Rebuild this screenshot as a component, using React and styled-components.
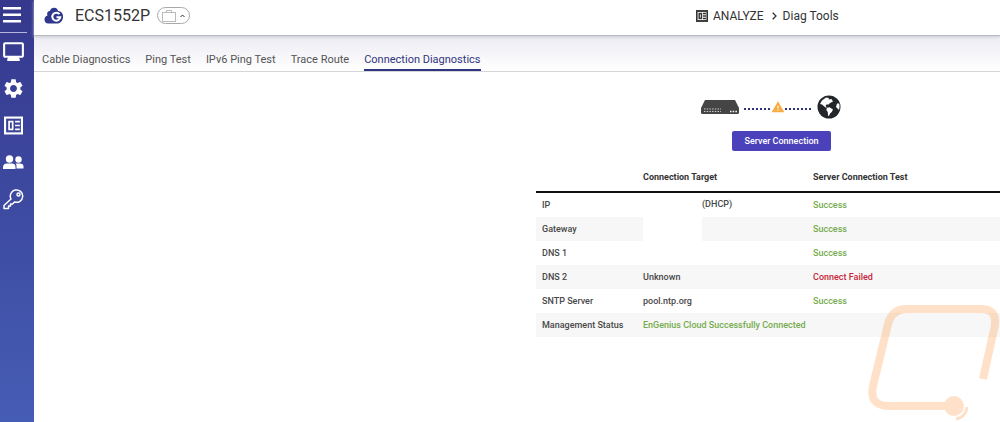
import styled, { createGlobalStyle } from "styled-components";
import { MdOutlineMonitor, MdSettings, MdWarning } from "react-icons/md";

const GlobalStyle = createGlobalStyle`
  * {
    box-sizing: border-box;
  }
  body {
    margin: 0;
    background: #fff;
    color: #333;
    font-family: Roboto, "Liberation Sans", sans-serif;
    overflow: hidden;
  }
  svg {
    display: block;
  }
`;

const Layout = styled.div`
  display: flex;
  min-height: 100vh;
`;

const Sidebar = styled.nav`
  display: flex;
  flex-direction: column;
  flex: 0 0 34px;
  background: linear-gradient(#35388d, #465db5);
`;

const MenuButton = styled.button`
  height: 33px;
  width: 27px;
  padding: 4px 3px 7px;
  border: 0;
  border-bottom: 1px solid #b5b5dd;
  background: none;
  color: #fff;
`;

const SideLink = styled.a`
  display: flex;
  align-items: center;
  justify-content: center;
  width: 27px;
  height: 37px;
  color: #fff;
`;

const Content = styled.div`
  flex: 1;
  min-width: 0;
  position: relative;
`;

const Header = styled.header`
  display: grid;
  grid-template-columns: 1fr 304px;
  align-items: center;
  height: 36px;
  padding-bottom: 4px;
  background: #fff;
  border-bottom: 1px solid #b9b9c1;
  box-shadow: 0 1px 3px #c9c9d2;
  position: relative;
`;

const Device = styled.div`
  display: flex;
  align-items: center;
  padding-left: 10px;
  > h1 {
    margin: 0 7px 0 10px;
    font-size: 16px;
    font-weight: 400;
    line-height: 20px;
  }
`;

const DeviceButton = styled.button`
  display: flex;
  align-items: center;
  justify-content: center;
  gap: 4px;
  width: 33px;
  height: 17px;
  padding: 0;
  border: 1px solid #aaa;
  border-radius: 9px;
  background: #fff;
`;

const Breadcrumb = styled.div`
  display: flex;
  align-items: center;
  font-size: 12px;
  > svg:first-child {
    margin-right: 5px;
  }
  > svg:nth-of-type(2) {
    margin: 0 6px 0 8px;
  }
`;

const Tabs = styled.nav`
  display: flex;
  gap: 15px;
  height: 36px;
  padding: 12px 8px 0;
  background: linear-gradient(#ececf3, #fff);
  border-bottom: 1px solid #d5d5da;
`;

const Tab = styled.a`
  height: 23px;
  font-size: 11px;
  line-height: 23px;
  text-decoration: none;
  white-space: nowrap;
  color: ${({ $active }) => ($active ? "#30357f" : "#555")};
  box-shadow: ${({ $active }) => ($active ? "inset 0 -2px #30357f" : "none")};
`;

const Main = styled.main`
  display: grid;
  grid-template-columns: 1fr 464px;
  padding-top: 22px;
`;

const Panel = styled.section`
  grid-column: 2;
`;

const Diagram = styled.div`
  display: flex;
  align-items: center;
  height: 26px;
  padding-left: 165px;
`;

const Link = styled.div`
  display: flex;
  align-items: center;
  margin: 0 5px;
`;

const Dots = styled.span`
  width: 27px;
  height: 2px;
  margin-top: 4px;
  background: repeating-linear-gradient(90deg, #30357f 0 2px, transparent 2px 4px);
`;

const TestButton = styled.button`
  display: block;
  width: 99px;
  height: 20px;
  margin: 11px 0 0 196px;
  padding: 0;
  border: 0;
  border-radius: 2px;
  background: #4b42bb;
  color: #fff;
  font-family: inherit;
  font-size: 9px;
  font-weight: 500;
`;

const Table = styled.table`
  width: 100%;
  margin-top: 12px;
  border-collapse: collapse;
  table-layout: fixed;
  font-size: 9px;
  font-weight: 500;
  text-align: left;
  color: #484848;
  th,
  td {
    height: 24px;
    padding: 0 0 0 6px;
    line-height: 12px;
    white-space: nowrap;
  }
  th {
    font-weight: 500;
  }
  thead th {
    height: 29px;
    font-weight: 700;
    color: #333;
    border-bottom: 2px solid #111;
  }
  tbody tr:nth-child(even) {
    background: #f7f7f7;
  }
`;

const Status = styled.span`
  color: ${({ $failed }) => ($failed ? "#c8253a" : "#75ab4d")};
`;

const Redacted = styled.span`
  display: inline-block;
  width: 59px;
  height: 24px;
  vertical-align: middle;
  background: #fff;
`;

const Watermark = styled.svg`
  position: absolute;
  right: 0;
  bottom: 0;
  pointer-events: none;
`;

const CloudLogo = () => (
  <svg width="21" height="18" viewBox="0 0 21 18">
    <path d="M4.500 16.500C1.500 16.500 .5 14.500 .5 12.500C.5 10.500 1.500 9 3.500 8.500C2.500 5.500 4 4 6 4C6.500 1.500 8.500 .5 10.500 .7C12.500 1 13.800 2 14 4C17.500 4 19.500 7 19 10.500C18.500 14.500 15.500 16.500 13 16.500Z" fill="#30388e" />
    <path d="M15.500 7.200A4 4 0 1 0 16.300 10.200H12.500" fill="none" stroke="#fff" strokeWidth="2" />
  </svg>
);

const PanelIcon = ({ size, bold }) => (
  <svg width={size} height={size} viewBox="0 0 18 18" fill="none" stroke="currentColor">
    <rect x="1" y="1.500" width="16" height="15" strokeWidth={bold ? 2.8 : 2} />
    <rect x="4.800" y="5.300" width="3.400" height="7.400" strokeWidth={bold ? 2.2 : 1.6} />
    <path d="M10.500 5.300H15M10.500 9H15M10.500 12.700H15" strokeWidth={bold ? 2.2 : 1.6} />
  </svg>
);

const PeopleIcon = () => (
  <svg width="21" height="15" viewBox="0 0 21 15" fill="#fff">
    <circle cx="6.500" cy="4" r="3.700" />
    <circle cx="15.500" cy="4.500" r="3.200" />
    <path d="M0 14V12C0 9.500 2 8.500 4 8.500H9C11 8.500 12.500 9.500 12.500 12V14Z" />
    <path d="M13.500 13.500V11C13.500 10 13.200 9.200 12.600 8.600H17C19 8.600 20.500 9.500 20.500 11.500V13.500Z" />
  </svg>
);

const KeyIcon = () => (
  <svg width="21" height="21" viewBox="0 0 21 21" fill="none" stroke="#fff" strokeWidth="1.500" strokeLinejoin="round">
    <path d="M8 10A6.200 6.200 0 1 1 11.500 13L9.500 15H7.500V17H5.500V19.500H1V16.500Z" />
    <circle cx="15.500" cy="5.500" r="1.500" />
  </svg>
);

const CaseIcon = () => (
  <svg width="14" height="12" viewBox="0 0 14 12" fill="none" stroke="#bbb">
    <rect x=".5" y="2.500" width="13" height="9" />
    <path d="M4.500 2.500V.5H9.500V2.500" />
  </svg>
);

const Switch = () => (
  <svg width="38" height="14" viewBox="0 0 38 14">
    <path d="M4 0H34L38 8V12.500Q38 14 36.500 14H1.500Q0 14 0 12.500V8Z" fill="#454545" />
    <path d="M3 9H20M3 11.500H20" stroke="#ccc" strokeWidth="1.200" strokeDasharray="1.500 1.200" />
    <path d="M29 11.500H36" stroke="#fff" strokeWidth="1.300" strokeDasharray="1.500 1.200" />
  </svg>
);

const Globe = () => (
  <svg width="24" height="24" viewBox="0 0 24 24">
    <circle cx="12" cy="12" r="11.500" fill="#22252a" />
    <path d="M5 5.500L9 2.500L12 3L11.500 4.500L14.500 4L16 6.500L13 8L11.500 9.500L9.500 9.500L8.500 11L10 12.500L8.500 12.500L5 9.500L3 9Z" fill="#fff" />
    <path d="M10 12.800L12.500 12.300L16 14.500L14.800 17L13 18.500L12 21L11 20.500L10.800 17L9.300 15Z" fill="#fff" />
    <path d="M20 8.500L22.300 8.500Q23 12 22 15L20.500 13.500L19 12Z" fill="#fff" />
  </svg>
);

const tabs = ["Cable Diagnostics", "Ping Test", "IPv6 Ping Test", "Trace Route", "Connection Diagnostics"];

const rows = [
  { name: "IP", target: <><Redacted />(DHCP)</>, result: "Success" },
  { name: "Gateway", target: <Redacted />, result: "Success" },
  { name: "DNS 1", target: "", result: "Success" },
  { name: "DNS 2", target: "Unknown", result: "Connect Failed" },
  { name: "SNTP Server", target: "pool.ntp.org", result: "Success" },
  { name: "Management Status", target: <Status>EnGenius Cloud Successfully Connected</Status>, result: "" },
];

const App = () => {
  return (
    <Layout>
      <GlobalStyle />
      <Sidebar>
        <MenuButton aria-label="Menu">
          <svg width="18" height="16" viewBox="0 0 18 16" fill="#fff">
            <path d="M0 0H18V2.500H0ZM0 6.500H18V9H0ZM0 13H18V15.500H0Z" />
          </svg>
        </MenuButton>
        <SideLink href="#dashboard" aria-label="Dashboard"><MdOutlineMonitor size={25} /></SideLink>
        <SideLink href="#settings" aria-label="Settings"><MdSettings size={23} /></SideLink>
        <SideLink href="#analyze" aria-label="Analyze"><PanelIcon size={19} /></SideLink>
        <SideLink href="#users" aria-label="Users"><PeopleIcon /></SideLink>
        <SideLink href="#license" aria-label="License"><KeyIcon /></SideLink>
      </Sidebar>
      <Content>
        <Header>
          <Device>
            <CloudLogo />
            <h1>ECS1552P</h1>
            <DeviceButton aria-label="Choose device">
              <CaseIcon />
              <svg width="5" height="4" viewBox="0 0 5 4" fill="none" stroke="#333">
                <path d="M.5 3L2.500 1L4.500 3" />
              </svg>
            </DeviceButton>
          </Device>
          <Breadcrumb>
            <PanelIcon size={12} bold />
            ANALYZE
            <svg width="5" height="8" viewBox="0 0 5 8" fill="none" stroke="#333" strokeWidth="1.300">
              <path d="M.7 .7L4 4L.7 7.300" />
            </svg>
            Diag Tools
          </Breadcrumb>
        </Header>
        <Tabs>
          {tabs.map((el) => (
            <Tab key={el} href="#tab" $active={el === "Connection Diagnostics"}>{el}</Tab>
          ))}
        </Tabs>
        <Main>
          <Panel>
            <Diagram>
              <Switch />
              <Link>
                <Dots />
                <MdWarning size={14} color="#f6ad43" />
                <Dots />
              </Link>
              <Globe />
            </Diagram>
            <TestButton>Server Connection</TestButton>
            <Table>
              <colgroup>
                <col width="101" />
                <col width="170" />
                <col />
              </colgroup>
              <thead>
                <tr>
                  <th />
                  <th>Connection Target</th>
                  <th>Server Connection Test</th>
                </tr>
              </thead>
              <tbody>
                {rows.map((row) => (
                  <tr key={row.name}>
                    <th scope="row">{row.name}</th>
                    <td>{row.target}</td>
                    <td><Status $failed={row.result === "Connect Failed"}>{row.result}</Status></td>
                  </tr>
                ))}
              </tbody>
            </Table>
          </Panel>
        </Main>
        <Watermark width="132" height="117" viewBox="868 305 132 117" fill="none" stroke="#ffa45a">
          <g opacity=".33">
            <path d="M983 379L994.500 327Q998 309 981 309H907Q892 309 888 324L873 386Q869 406 889 406H954" strokeWidth="8" />
            <circle cx="954" cy="406" r="10" fill="#ffa45a" stroke="none" />
            <path d="M967 407A13 13 0 0 1 956 419" strokeWidth="3" />
          </g>
        </Watermark>
      </Content>
    </Layout>
  );
};

export default App;
